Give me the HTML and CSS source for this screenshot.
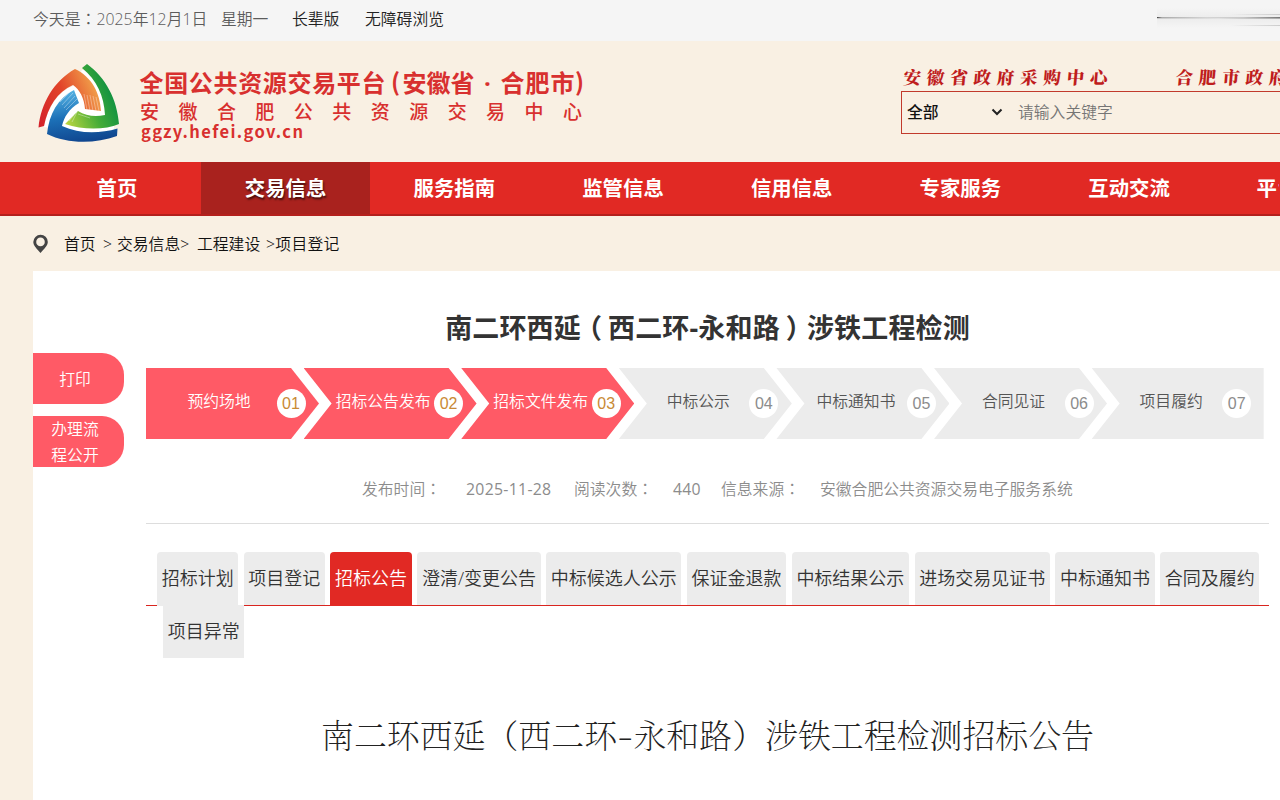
FILE: index.html
```html
<!DOCTYPE html>
<html lang="zh-CN">
<head>
<meta charset="utf-8">
<title>南二环西延（西二环-永和路）涉铁工程检测</title>
<link rel="stylesheet" href="styles.css">
</head>
<body>
<div class="topbar">
  <span class="date">今天是<span class="colon" lang="zh-TW">：</span>2025年12月1日</span>
  <span class="week">星期一</span>
  <a class="elder">长辈版</a>
  <a class="access">无障碍浏览</a>
  <span class="smudge"></span>
</div>

<header class="header">
  <svg class="logo" width="560" height="100" viewBox="30 55 560 100">
    <defs>
      <linearGradient id="gr" x1="0" y1="1" x2="1" y2="0.6"><stop offset="0" stop-color="#d3202a"/><stop offset=".55" stop-color="#e2452a"/><stop offset="1" stop-color="#f09a48"/></linearGradient>
      <linearGradient id="gg" x1="0" y1="1" x2="1" y2="0.5"><stop offset="0" stop-color="#c4d93f"/><stop offset=".55" stop-color="#43ab38"/><stop offset="1" stop-color="#078c43"/></linearGradient>
      <linearGradient id="gb" x1="0.3" y1="0" x2="0.5" y2="1"><stop offset="0" stop-color="#57b4e4"/><stop offset=".5" stop-color="#1c71b8"/><stop offset="1" stop-color="#10468f"/></linearGradient>
    </defs>
    <path d="M44 127C48 106 58 92 73 86L82 70L86 69C104 85 111 101 114 124L114 130C90 135 72 132 52 128Z" fill="#fff"/>
    <path d="M38.500 127.500C41 103 54 81 75 69C92 77 100 93 101 111L85 109C84 98 80 90 73 85C57 92 48 107 44 126Z" fill="url(#gr)"/>
    <path d="M82 68L87 64C106 78 117 99 119 124C105 130 83 130 65 124L78 111C86 116 95 117 105 115C104 96 97 80 82 68Z" fill="url(#gg)"/>
    <path d="M47 134C49 114 58 98 74 90L79 103C69 109 64 117 62 126C79 134 99 134 117.500 128.500L117 136C95 144 67 144 47 134Z" fill="url(#gb)"/>
    <path d="M87 110L84 94M90 111L87 95M93 111L90 95M96 111L93 96M99 111L96 97M70 92L60 102M73 93L62 105M75 96L64 108M77 99L66 110M77 112L72 122M74 115L69 121M78 114L90 118" stroke="#fff" stroke-width=".7" opacity=".5"/>
    <g class="brand">
      <text class="b1" x="139.500" y="92" textLength="246" lengthAdjust="spacing">全国公共资源交易平台</text>
      <text class="b1" x="391" y="91">(</text>
      <text class="b1" x="402.500" y="92" textLength="72" lengthAdjust="spacing">安徽省</text>
      <text class="b1 dot" x="484" y="92">·</text>
      <text class="b1" x="500.500" y="92" textLength="74" lengthAdjust="spacing">合肥市</text>
      <text class="b1" x="575" y="91">)</text>
      <text class="b2" x="140" y="119" textLength="442" lengthAdjust="spacing">安徽合肥公共资源交易中心</text>
      <text class="b3" x="141" y="138" textLength="162" lengthAdjust="spacing">ggzy.hefei.gov.cn</text>
    </g>
  </svg>
  <div class="search-side">
    <div class="centers"><span>安徽省政府采购中心</span><span>合肥市政府</span></div>
    <div class="search">
      <span class="scope">全部</span>
      <svg class="chev" width="12" height="8" viewBox="0 0 12 8"><path d="M1.500 1.500L6 6L10.500 1.500" fill="none" stroke="#222" stroke-width="2"/></svg>
      <span class="ph">请输入关键字</span>
    </div>
  </div>
</header>

<nav class="nav">
  <a>首页</a><a class="on">交易信息</a><a>服务指南</a><a>监管信息</a><a>信用信息</a><a>专家服务</a><a>互动交流</a><a class="cut">平台</a>
</nav>

<div class="crumbs">
  <svg width="16" height="20" viewBox="0 0 16 20"><path d="M7.500 .8A7.200 7.200 0 0 1 14.800 8C14.800 11.500 11 15 7.500 19C4 15 .3 11.500 .3 8A7.200 7.200 0 0 1 7.500 .8ZM7.500 3.600A4.300 4.300 0 1 0 7.500 12.200A4.300 4.300 0 1 0 7.500 3.600Z" fill="#444" fill-rule="evenodd"/></svg>
  <span class="c1">首页</span><span class="c2">&gt;</span><span class="c3">交易信息&gt;</span><span class="c4">工程建设</span><span class="c5">&gt;项目登记</span>
</div>

<main class="sheet">
  <aside class="side">
    <a>打印</a>
    <a>办理流<br>程公开</a>
  </aside>
  <section class="content">
    <h1 class="title">南二环西延<span class="po">（</span>西二环-永和路<span class="pc">）</span>涉铁工程检测</h1>
    <div class="steps">
      <div class="step first done"><span>预约场地</span><i>01</i></div>
      <div class="step done"><span>招标公告发布</span><i>02</i></div>
      <div class="step done"><span>招标文件发布</span><i>03</i></div>
      <div class="step"><span>中标公示</span><i>04</i></div>
      <div class="step"><span>中标通知书</span><i>05</i></div>
      <div class="step"><span>合同见证</span><i>06</i></div>
      <div class="step last"><span>项目履约</span><i>07</i></div>
    </div>
    <div class="meta">
      <span class="m1">发布时间<span class="colon" lang="zh-TW">：</span></span><span class="m2">2025-11-28</span><span class="m3">阅读次数<span class="colon" lang="zh-TW">：</span></span><span class="m4">440</span><span class="m5">信息来源<span class="colon" lang="zh-TW">：</span></span><span>安徽合肥公共资源交易电子服务系统</span>
    </div>
    <div class="tabs">
      <a class="first">招标计划</a><a>项目登记</a><a class="on">招标公告</a><a>澄清/变更公告</a><a>中标候选人公示</a><a>保证金退款</a><a>中标结果公示</a><a>进场交易见证书</a><a>中标通知书</a><a>合同及履约</a>
    </div>
    <div class="tabs-more"><a>项目异常</a></div>
    <h2 class="doc-title">南二环西延（西二环<span class="dash">-</span>永和路）涉铁工程检测招标公告</h2>
  </section>
</main>
</body>
</html>
```
FILE: styles.css
```css
* { box-sizing: border-box; }

body {
  margin: 0;
  width: 1280px;
  height: 800px;
  overflow: hidden;
  background: #f9f0e3;
  font-family: "Open Sans", "Noto Sans CJK SC", sans-serif;
  font-size: 15.8px;
  font-weight: 350;
  white-space: nowrap;
}

.colon { font-family: "Noto Sans CJK TC", sans-serif; }

/* top strip */
.topbar {
  display: flex;
  height: 41px;
  padding-left: 33px;
  line-height: 38px;
  background: #f5f5f5;
  color: #5c5c5c;
}
.date { width: 188px; letter-spacing: .05px; }
.week { width: 71px; }
.elder { width: 73px; color: #222; }
.access { width: 792px; color: #222; }
.smudge {
  width: 123px;
  height: 20px;
  margin-top: 8px;
  background:
    linear-gradient(90deg, #444, #aaa 4%, #d4d4d4 40%, #c8c8c8 70%, #777) 0 9px / 100% 1px no-repeat,
    linear-gradient(90deg, #ccc, #e2e2e2 50%, #aaa) 0 10px / 100% 1px no-repeat,
    linear-gradient(90deg, transparent 60%, #ccc) 0 6px / 100% 1px no-repeat,
    linear-gradient(90deg, transparent 60%, #ccc) 0 17px / 100% 1px no-repeat,
    linear-gradient(#f5f5f5, #ececec 50%, #f5f5f5);
}

/* masthead */
.header {
  display: flex;
  height: 121px;
  padding: 14px 0 0 30px;
}
.logo { flex: none; }
.brand { fill: #d8302f; font-family: "Noto Sans CJK SC", sans-serif; }
.b1 { font-size: 24px; font-weight: 700; }
.dot { font-family: "Open Sans", sans-serif; }
.b2 { font-size: 19px; font-weight: 500; }
.b3 { font-size: 16.500px; font-weight: 700; }
.search-side { flex: none; width: 379px; margin-left: 311px; overflow: hidden; }
.centers {
  display: flex;
  gap: 62px;
  height: 36px;
  padding-left: 3px;
  line-height: 44px;
  color: #bf1d1d;
  font-family: KaiTi, "Noto Serif CJK SC", "Noto Sans CJK SC", serif;
  font-size: 17.500px;
  font-weight: 900;
  letter-spacing: 5.800px;
}
.centers span { transform: skewX(-5deg); }
.search {
  display: flex;
  align-items: center;
  height: 43px;
  border: 1px solid #c23a2c;
  border-right: 0;
  padding: 0 0 2px 5px;
}
.scope { width: 84px; color: #111; font-weight: 500; }
.chev { margin-right: 15px; }
.ph { color: #757575; }

/* main navigation */
.nav {
  display: flex;
  height: 54px;
  padding-left: 32.600px;
  background: #e12924;
  border-bottom: 2px solid #b4201d;
}
.nav a {
  flex: none;
  width: 168.700px;
  line-height: 53px;
  height: 52px;
  text-align: center;
  color: #fff;
  font-size: 20.400px;
  font-weight: 700;
}
.nav .on { background: #a9221e; text-shadow: 1px 2px 2px rgba(0, 0, 0, .6); }
.nav .cut { width: 66px; padding-left: 43px; text-align: left; overflow: hidden; }

.crumbs {
  display: flex;
  align-items: center;
  height: 55px;
  padding-left: 33px;
  color: #111;
}
.crumbs svg { margin: 0 15px 0 0; }
.c1 { width: 39px; }
.c2 { width: 14px; }
.c3 { width: 80px; }
.c4 { width: 69px; }
.c5 { letter-spacing: .3px; }

/* page sheet */
.sheet {
  display: flex;
  height: 529px;
  margin-left: 33px;
  background: #fff;
}
.side {
  display: flex;
  flex-direction: column;
  gap: 12px;
  width: 113px;
  padding-top: 82px;
}
.side a {
  display: flex;
  align-items: center;
  justify-content: center;
  width: 91px;
  height: 51px;
  padding-right: 7px;
  border-radius: 0 22px 22px 0;
  background: #ff5a66;
  color: #fff;
  line-height: 26px;
}
.content { flex: none; width: 1123px; }
.title {
  margin: 0;
  height: 97px;
  padding-top: 36px;
  line-height: 42px;
  text-align: center;
  color: #333;
  font-size: 27px;
  font-weight: 700;
  letter-spacing: .15px;
}
.po { margin: 0 6px 0 -6px; }
.pc { margin: 0 -6px 0 6px; }

.steps { display: flex; height: 71px; }
.step {
  display: flex;
  flex: none;
  width: 173px;
  margin-right: -15.400px;
  padding-left: 28.500px;
  background: #ececec;
  color: #555;
  clip-path: polygon(0 0, 145px 0, 100% 50%, 145px 100%, 0 100%, 28px 50%);
}
.step.first {
  padding-left: 15.500px;
  clip-path: polygon(0 0, 145px 0, 100% 50%, 145px 100%, 0 100%);
}
.step.last { width: 172px; margin-right: 0; clip-path: polygon(0 0, 100% 0, 100% 100%, 0 100%, 28px 50%); }
.step.done { background: #ff5a66; color: #fff; }
.step span { flex: 1; line-height: 67px; text-align: center; }
.step i {
  width: 29px;
  height: 29px;
  margin: 21px 13.500px 0 0;
  border-radius: 50%;
  background: #fff;
  color: #8c8c8c;
  font-family: "Liberation Sans", Arial, sans-serif;
  font-size: 16px;
  font-style: normal;
  line-height: 29px;
  text-align: center;
}
.step.last i { margin-right: 12.500px; }
.step.done i { color: #c98a35; }

.meta {
  display: flex;
  height: 85px;
  padding: 30px 0 0 216px;
  border-bottom: 1px solid #ddd;
  line-height: 40px;
  color: #8c8c8c;
}
.m1 { width: 104px; }
.m2 { width: 108px; font-weight: 400; letter-spacing: .3px; }
.m3 { width: 99px; }
.m4 { width: 48px; font-weight: 400; letter-spacing: .2px; }
.m5 { width: 99px; }

.tabs {
  display: flex;
  gap: 5.500px;
  height: 82px;
  padding: 28px 0 0 11px;
  border-bottom: 1px solid #d9251f;
}
.tabs a, .tabs-more a {
  flex: none;
  height: 53px;
  padding: 0 4.650px;
  border-radius: 4px 4px 0 0;
  background: #ececec;
  color: #333;
  font-size: 18px;
  line-height: 53px;
}
.tabs .on { height: 54px; background: #e12924; color: #fff; }
.tabs .first { height: 54px; margin-right: -.1px; }
.tabs-more { display: flex; height: 52px; padding-left: 17px; }
.tabs-more a { margin-top: -1px; border-radius: 0; }

.doc-title {
  margin: 0;
  padding-top: 49px;
  line-height: 54px;
  text-align: center;
  color: #222;
  font-family: SimSun, "Noto Serif CJK SC", "Noto Sans CJK SC", serif;
  font-size: 32.900px;
  font-weight: 200;
}
.dash { display: inline-block; width: .5em; text-align: center; transform: scaleX(1.4); }
```
